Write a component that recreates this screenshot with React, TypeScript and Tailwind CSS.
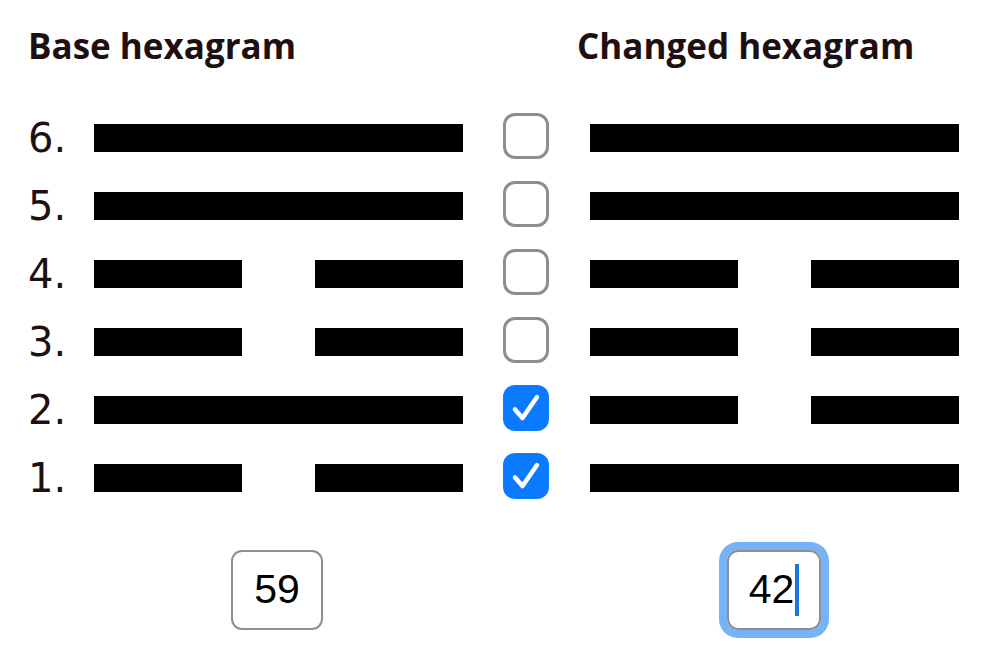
import { useState } from 'react'

const BASE = [false, true, false, false, true, true] // index 0 = line 1, true = solid
const CHANGED_FLAGS = [true, true, false, false, false, false]

function Line({ solid }: { solid: boolean }) {
  if (solid) {
    return <div className="h-[28px] w-[369px] bg-black" />
  }
  return (
    <div className="flex h-[28px] w-[369px] justify-between">
      <div className="h-full w-[148px] bg-black" />
      <div className="h-full w-[148px] bg-black" />
    </div>
  )
}

function Check({ checked, onChange }: { checked: boolean; onChange: () => void }) {
  return (
    <button
      type="button"
      onClick={onChange}
      className={
        checked
          ? 'flex h-[46px] w-[46px] items-center justify-center rounded-[12px] bg-[#0a7aff]'
          : 'h-[46px] w-[46px] rounded-[12px] border-[3.5px] border-[#8e8e8e] bg-white'
      }
    >
      {checked && (
        <svg width="46" height="46" viewBox="0 0 46 46" fill="none">
          <path d="M12 24.5 L19.5 33 L34 12" stroke="white" strokeWidth="4.5" strokeLinecap="round" strokeLinejoin="round" />
        </svg>
      )}
    </button>
  )
}

export default function App() {
  const [flags, setFlags] = useState(CHANGED_FLAGS)
  const changed = BASE.map((s, i) => (flags[i] ? !s : s))
  const rows = [5, 4, 3, 2, 1, 0]

  return (
    <div className="h-[665px] w-[1000px] bg-white pl-[28px] pt-[24px] font-['Open_Sans',sans-serif] text-[#1e1010]">
      <div className="flex">
        <h2 className="w-[549px] text-[35px] font-bold leading-[44px]">Base hexagram</h2>
        <h2 className="text-[35px] font-bold leading-[44px]">Changed hexagram</h2>
      </div>

      <div className="mt-[36px] flex flex-col">
        {rows.map((i) => (
          <div key={i} className="flex h-[68px] items-center">
            <span className="w-[66px] font-['DejaVu_Sans',sans-serif] text-[40px] leading-none">{i + 1}.</span>
            <Line solid={BASE[i]} />
            <div className="ml-[40px] mr-[41px] -mt-[5px] flex">
              <Check
                checked={flags[i]}
                onChange={() => setFlags(flags.map((f, j) => (j === i ? !f : f)))}
              />
            </div>
            <Line solid={changed[i]} />
          </div>
        ))}
      </div>

      <div className="mt-[38px] flex font-['Liberation_Sans',sans-serif] text-[41px] text-black">
        <div className="ml-[203px] flex h-[80px] w-[92px] items-center justify-center rounded-[11px] border-2 border-[#8e8e8e]">
          59
        </div>
        <div className="ml-[404px] flex h-[80px] w-[94px] items-center justify-center rounded-[11px] border-2 border-[#8e8e8e] ring-[8px] ring-[#76b2f7]">
          <span>42</span>
          <span className="ml-[1px] h-[52px] w-[4px] bg-[#1a73e8]" />
        </div>
      </div>
    </div>
  )
}
